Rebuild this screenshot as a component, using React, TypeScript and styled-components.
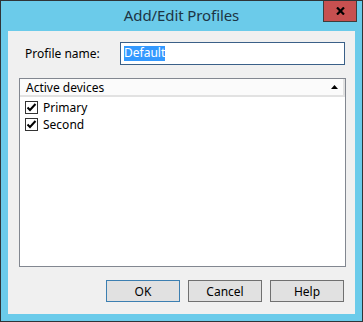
import React from "react";
import styled, { createGlobalStyle } from "styled-components";

const Global = createGlobalStyle`
  html, body { margin: 0; padding: 0; background: #ffffff; }
  * { box-sizing: border-box; }
  body { font-family: "Noto Sans", "Open Sans", sans-serif; }
`;

const Window = styled.div`
  position: relative;
  width: 363px;
  height: 322px;
  background: #6bcbea;
  border: 1px solid #2f3437;
  display: flex;
  flex-direction: column;
`;

const TitleBar = styled.div`
  height: 30px;
  flex: 0 0 30px;
  display: flex;
  align-items: center;
  justify-content: center;
  padding-bottom: 2px;
  font-size: 15px;
  color: #1d3444;
  letter-spacing: -0.1px;
`;

const CloseButton = styled.div`
  position: absolute;
  top: 0;
  left: 322px;
  width: 34px;
  height: 21px;
  background: #c75050;
  border: 1px solid #3d3d3d;
  border-top: none;
  display: flex;
  align-items: center;
  justify-content: center;
`;

const Client = styled.div`
  flex: 1;
  margin: 0 7px 7px 7px;
  background: #f0f0f0;
  display: flex;
  flex-direction: column;
  font-size: 12px;
  color: #000;
`;

const NameRow = styled.div`
  display: flex;
  align-items: center;
  margin-top: 11px;
  padding-left: 17px;
  height: 23px;
`;

const Label = styled.div`
  width: 95px;
`;

const TextBox = styled.div`
  width: 225px;
  height: 23px;
  border: 1px solid #3a6088;
  background: #fff;
  display: flex;
  align-items: center;
  padding-left: 3px;
`;

const Selected = styled.span`
  background: #3399ff;
  color: #fff;
  line-height: 14px;
  padding: 0 0 1px 0;
`;

const ListBox = styled.div`
  margin: 13px 0 0 11px;
  width: 327px;
  height: 189px;
  border: 1px solid #828790;
  background: #fff;
  display: flex;
  flex-direction: column;
`;

const Header = styled.div`
  height: 18px;
  flex: 0 0 18px;
  display: flex;
  align-items: center;
  justify-content: space-between;
  background: #fbfbfb;
  border-bottom: 2px solid #e2e2e2;
  border-right: 2px solid #e2e2e2;
  padding: 0 5px 0 6px;
`;

const Rows = styled.div`
  padding-top: 2px;
  display: flex;
  flex-direction: column;
`;

const Row = styled.div`
  height: 17px;
  flex: 0 0 17px;
  line-height: 17px;
  display: flex;
  align-items: center;
  padding-left: 5px;
  gap: 5px;
`;

const Check = styled.div`
  width: 13px;
  height: 13px;
  border: 1px solid #333;
  background: #fff;
  display: flex;
  align-items: center;
  justify-content: center;
`;

const ButtonRow = styled.div`
  margin-top: auto;
  margin-bottom: 12px;
  display: flex;
  justify-content: flex-end;
  gap: 8px;
  padding-right: 11px;
`;

const Button = styled.div<{ $default?: boolean }>`
  width: 74px;
  height: 22px;
  background: #e1e1e1;
  border: 1px solid ${(p) => (p.$default ? "#3c7fb1" : "#707070")};
  display: flex;
  align-items: center;
  justify-content: center;
`;

const CheckMark = () => (
  <svg width="11" height="11" viewBox="0 0 11 11">
    <path d="M1.5 5.5 L4 8 L9.5 2" stroke="#000" strokeWidth="2" fill="none" />
  </svg>
);

export default function App() {
  return (
    <>
      <Global />
      <Window>
        <TitleBar>Add/Edit Profiles</TitleBar>
        <CloseButton>
          <svg width="9" height="8" viewBox="0 0 9 8">
            <path d="M1 0.5 L8 7.5 M8 0.5 L1 7.5" stroke="#000" strokeWidth="2.2" />
          </svg>
        </CloseButton>
        <Client>
          <NameRow>
            <Label>Profile name:</Label>
            <TextBox>
              <Selected>Default</Selected>
            </TextBox>
          </NameRow>
          <ListBox>
            <Header>
              <span>Active devices</span>
              <svg width="7" height="4" viewBox="0 0 7 4">
                <path d="M3.5 0 L7 4 L0 4 Z" fill="#000" />
              </svg>
            </Header>
            <Rows>
              <Row>
                <Check><CheckMark /></Check>
                <span>Primary</span>
              </Row>
              <Row>
                <Check><CheckMark /></Check>
                <span>Second</span>
              </Row>
            </Rows>
          </ListBox>
          <ButtonRow>
            <Button $default>OK</Button>
            <Button>Cancel</Button>
            <Button>Help</Button>
          </ButtonRow>
        </Client>
      </Window>
    </>
  );
}
